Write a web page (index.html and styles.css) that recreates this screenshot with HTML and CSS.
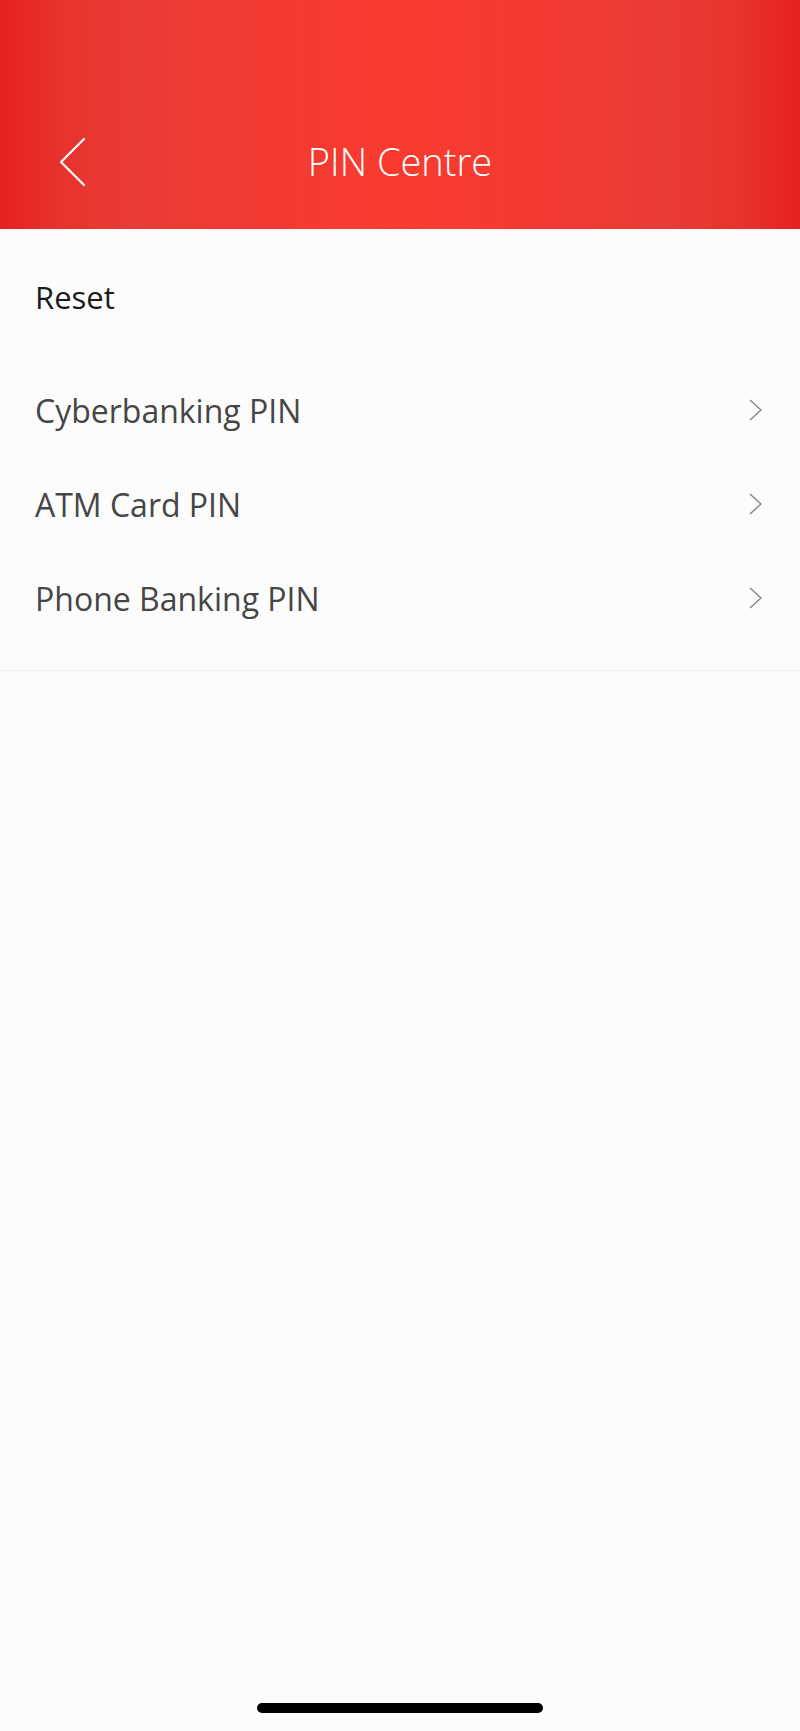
FILE: index.html
```html
<!DOCTYPE html>
<html lang="en">
<head>
    <meta charset="UTF-8">
    <meta name="viewport" content="width=device-width, initial-scale=1.0">
    <title>PIN Centre</title>
    <link rel="stylesheet" href="styles.css">
</head>
<body>
    <!-- Red header with back button -->
    <header class="header">
        <div class="nav-bar">
            <button class="back-btn" aria-label="Back">
                <svg width="30" height="50" viewBox="0 0 30 50">
                    <polyline points="25,3 2,26 25,49" fill="none" stroke="#fff" stroke-width="2.2" stroke-linecap="round" stroke-linejoin="round"/>
                </svg>
            </button>
            <h1 class="title">PIN Centre</h1>
        </div>
    </header>

    <!-- Reset options -->
    <main class="content">
        <h2 class="section-title">Reset</h2>
        <ul class="menu">
            <li class="menu-item">
                <span>Cyberbanking PIN</span>
                <svg class="chevron" width="14" height="22" viewBox="0 0 14 22">
                    <polyline points="2,1 13,11 2,21" fill="none" stroke="#858585" stroke-width="1.4"/>
                </svg>
            </li>
            <li class="menu-item">
                <span>ATM Card PIN</span>
                <svg class="chevron" width="14" height="22" viewBox="0 0 14 22">
                    <polyline points="2,1 13,11 2,21" fill="none" stroke="#858585" stroke-width="1.4"/>
                </svg>
            </li>
            <li class="menu-item">
                <span>Phone Banking PIN</span>
                <svg class="chevron" width="14" height="22" viewBox="0 0 14 22">
                    <polyline points="2,1 13,11 2,21" fill="none" stroke="#858585" stroke-width="1.4"/>
                </svg>
            </li>
        </ul>
    </main>

    <div class="home-indicator"></div>
</body>
</html>
```

FILE: styles.css
```css
/* General reset */
* {
    margin: 0;
    padding: 0;
    box-sizing: border-box;
}

body {
    font-family: "Open Sans", "Noto Sans", sans-serif;
    background-color: #fdfcfd;
    min-height: 1731px;
}

/* Header */
.header {
    height: 229px;
    padding-top: 96px;
    background: linear-gradient(90deg, #e5221f 0%, #e8332e 8%, #ea3b36 17%, #f23a32 32%, #f93b2f 50%, #f23a32 68%, #ea3b36 83%, #e8332e 92%, #e5221f 100%);
}

.nav-bar {
    position: relative;
    height: 129px;
    display: flex;
    align-items: center;
    justify-content: center;
}

.back-btn {
    position: absolute;
    left: 59px;
    top: 40px;
    background: none;
    border: none;
    display: flex;
}

.title {
    font-size: 38px;
    font-weight: 300;
    color: #fff;
}

/* Content */
.section-title {
    padding: 48px 35px 0;
    font-size: 31px;
    font-weight: 400;
    line-height: 40px;
    color: #1b1b1b;
}

.menu {
    list-style: none;
    padding: 46px 0 25px;
    border-bottom: 1px solid #efedef;
}

.menu-item {
    height: 94px;
    padding: 0 38px 0 35px;
    display: flex;
    align-items: center;
    justify-content: space-between;
    font-size: 32px;
    color: #464646;
}

.home-indicator {
    position: fixed;
    bottom: 18px;
    left: 257px;
    width: 286px;
    height: 10px;
    border-radius: 5px;
    background-color: #000;
}
```
